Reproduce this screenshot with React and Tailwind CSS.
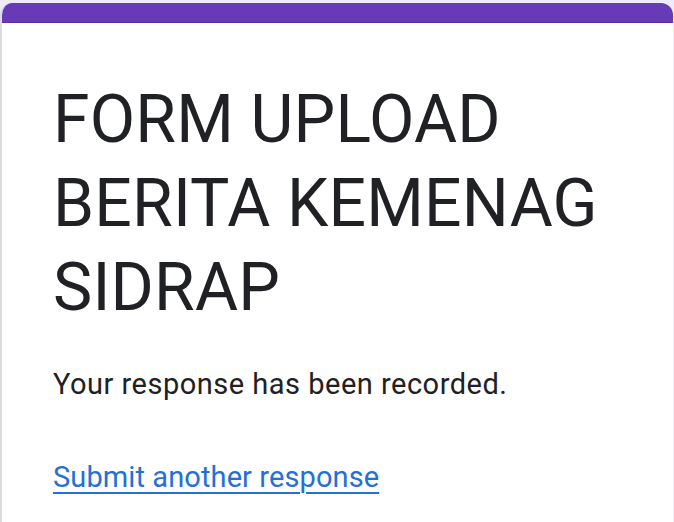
export default function App() {
  return (
    <div className="h-[522px] w-[674px] overflow-hidden bg-[#f0ebf8] pt-[3px]" style={{ fontFamily: "Roboto, 'Noto Sans', sans-serif" }}>
      <div className="h-[560px] w-[673px] overflow-hidden rounded-t-[12px] border-l-2 border-[#dadce0] bg-white">
        <div className="h-[20px] border-b border-[#5b2fa8] bg-[#673ab7]"></div>
        <div className="pl-[51px] pt-[55px]">
          <h1 className="text-[66px] leading-[84px] font-normal tracking-[0.2px] text-[#202124]">
            FORM UPLOAD<br />BERITA KEMENAG<br />SIDRAP
          </h1>
          <p className="mt-[34px] text-[29px] leading-[40px] tracking-[0.5px] text-[#202124]">Your response has been recorded.</p>
          <a href="#" className="mt-[53px] block text-[29px] leading-[40px] tracking-[0.1px] text-[#2470d6] underline decoration-2 underline-offset-[5px]">Submit another response</a>
        </div>
      </div>
    </div>
  );
}
